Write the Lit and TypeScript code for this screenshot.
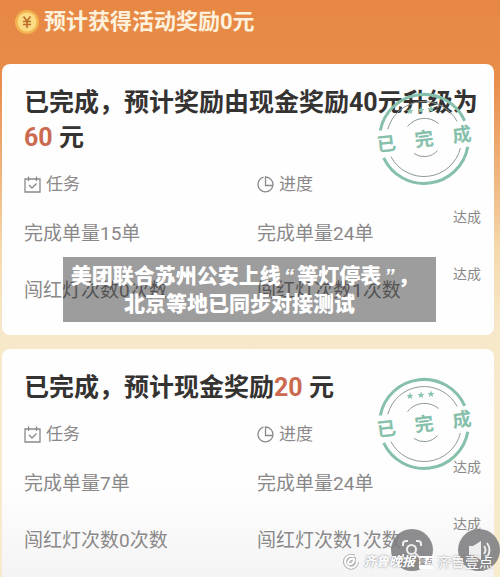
import { LitElement, html, css, svg } from "lit";
import { customElement, property } from "lit/decorators.js";

type Row = { task: string; progress: string };

const STAR = "M0,-3.4 L1,-1.1 L3.4,-0.9 L1.6,0.7 L2.1,3.1 L0,1.8 L-2.1,3.1 L-1.6,0.7 L-3.4,-0.9 L-1,-1.1 Z";

@customElement("done-stamp")
class DoneStamp extends LitElement {
  static styles = css`
    :host { display: block; width: 112px; height: 96px; }
    svg { display: block; width: 100%; height: 100%; }
    .ring { fill: none; stroke: #86c0ab; stroke-width: 3; }
    .line { fill: none; stroke: #8e9a96; stroke-width: 1; }
    .star { fill: #8cc4af; }
    .word { fill: #86c0ab; font: 700 19px "Noto Sans CJK SC", sans-serif; text-anchor: middle; }
  `;
  render() {
    return html`<svg viewBox="-56 -48 112 96" role="img" aria-label="已完成">
      <path class="ring" d="M-43.7,-8.5 A44.5,44.5 0 0 1 40.7,-18.1 M43.8,7.7 A44.5,44.5 0 0 1 -40.3,18.8" />
      <path class="line" d="M-36.2,-9.7 A37.5,37.5 0 0 1 33.1,-17.6 M36.4,9.1 A37.5,37.5 0 0 1 -33.1,17.6" />
      <path class="line" d="M-16.5,-12.5 A21.7,21.7 0 0 1 14.5,-15.5 M13.5,11.5 A17.7,17.7 0 0 1 -10,14.5" />
      ${[[-14, -28], [-3, -29], [7, -30]].map(
        ([x, y]) => svg`<path class="star" d=${STAR} transform="translate(${x} ${y})" />`
      )}
      <g transform="rotate(-7)">
        <text class="word" x="-38" y="7">已</text>
        <text class="word" x="0" y="7">完</text>
        <text class="word" x="38" y="7">成</text>
      </g>
    </svg>`;
  }
}

@customElement("reward-card")
class RewardCard extends LitElement {
  @property({ attribute: false }) rows: Row[] = [];

  static styles = css`
    :host {
      display: block;
      position: relative;
      background: #fefefe;
      border-radius: 8px;
      padding: 21px 13px 16px 22px;
    }
    :host([last]) {
      border-radius: 8px 8px 0 0;
      padding-bottom: 8px;
      background: linear-gradient(#fefefe 60%, #f4f4f5);
    }
    h2 { margin: 0 0 17px; font-size: 25px; line-height: 35px; font-weight: 700; color: #353332; }
    done-stamp { position: absolute; top: 27px; right: 14px; }
    table { width: 100%; table-layout: fixed; border-collapse: collapse; }
    th, td { padding: 0; text-align: left; font-weight: 400; color: #8a8888; }
    th { height: 24px; padding-bottom: 9px; font-size: 17px; line-height: 24px; }
    .task { width: 51%; }
    .state { width: 28px; }
    .label { display: flex; align-items: center; gap: 5px; }
    .label svg { width: 17px; height: 17px; fill: none; stroke: #8a8888; stroke-width: 1.3; }
    td { height: 57px; font-size: 19px; line-height: 24px; white-space: nowrap; }
    td.reached { vertical-align: top; font-size: 14px; }
  `;
  render() {
    return html`
      <h2><slot></slot></h2>
      <table>
        <thead>
          <tr>
            <th class="task">
              <span class="label">
                <svg viewBox="0 0 17 17"><path d="M1,3 H16 V16 H1 Z M4.5,0.5 V5 M12.5,0.5 V5 M5,9 L8,12 L12.5,7.5" /></svg>
                任务
              </span>
            </th>
            <th>
              <span class="label">
                <svg viewBox="0 0 17 17"><path d="M6.5,1.2 A7.5,7.5 0 1 0 15.9,9.5 H8.5 V1 A7.5,7.5 0 0 1 15.9,9.5" /></svg>
                进度
              </span>
            </th>
            <th class="state"></th>
          </tr>
        </thead>
        <tbody>
          ${this.rows.map(
            (r) => html`<tr><td>${r.task}</td><td>${r.progress}</td><td class="reached">达成</td></tr>`
          )}
        </tbody>
      </table>
      <done-stamp></done-stamp>
    `;
  }
}

@customElement("app-root")
class AppRoot extends LitElement {
  static styles = css`
    :host {
      display: block;
      position: relative;
      min-height: 100vh;
      box-sizing: border-box;
      overflow: hidden;
      font-family: Roboto, "Noto Sans CJK SC", sans-serif;
      background: linear-gradient(#e78744, #e98d4a 80px, #efb27a 170px, #f5d9ac 250px, #f7e8ca 330px, #f7ebcb);
    }
    header {
      display: flex;
      align-items: center;
      gap: 5px;
      height: 44px;
      padding-left: 15px;
      margin-bottom: 20px;
    }
    h1 { margin: 0; font-size: 22px; line-height: 30px; font-weight: 700; color: #fdf1dc; }
    .coin { width: 24px; height: 24px; }
    .cards { display: flex; flex-direction: column; gap: 14px; padding: 0 6px 0 2px; }
    .amount { color: #cb6a50; }
    .caption {
      position: absolute;
      top: 257px;
      left: 63px;
      right: 64px;
      margin: 0;
      padding: 4px 20px 7px 0;
      background: rgba(0, 0, 0, 0.38);
      color: #fff;
      font: 900 21px/26px "Noto Sans CJK SC", sans-serif;
      text-align: center;
      white-space: nowrap;
    }
    .quote { font-family: "Liberation Sans", sans-serif; font-style: italic; padding: 0 3px; }
    .half { font-feature-settings: "halt"; }
    .tools { position: absolute; right: 0; bottom: 6px; display: flex; gap: 25px; }
    button {
      width: 42px;
      height: 42px;
      padding: 0;
      border: 0;
      border-radius: 50%;
      background: rgba(125, 125, 128, 0.88);
    }
    button svg { display: block; width: 42px; height: 42px; fill: none; stroke: #eee; stroke-width: 2; }
    .solid { fill: #eee; stroke: none; }
    .mark {
      position: absolute;
      right: 7px;
      bottom: 5px;
      display: flex;
      align-items: center;
      gap: 4px;
      color: #fff;
      font-size: 14px;
      line-height: 20px;
      text-shadow: 0 0 2px #777;
      pointer-events: none;
    }
    .mark svg { flex: none; width: 16px; height: 16px; fill: none; }
    .halo { stroke: #b4b4b4; stroke-width: 4; }
    .swirl { stroke: #fff; stroke-width: 2; }
    .script { font-style: italic; font-weight: 700; font-size: 13px; }
    .tag { background: #fff; color: #777; font-size: 7px; line-height: 13px; text-shadow: none; border-radius: 1px; }
  `;

  private first: Row[] = [
    { task: "完成单量15单", progress: "完成单量24单" },
    { task: "闯红灯次数0次数", progress: "闯红灯次数1次数" },
  ];
  private second: Row[] = [
    { task: "完成单量7单", progress: "完成单量24单" },
    { task: "闯红灯次数0次数", progress: "闯红灯次数1次数" },
  ];

  render() {
    return html`
      <header>
        <svg class="coin" viewBox="0 0 24 24">
          <circle cx="12" cy="12" r="12" fill="#f3b350" />
          <circle cx="12" cy="12" r="9.5" fill="#fbdc85" />
          <path d="M8.5,6.5 L12,11 L15.5,6.5 M12,11 V18 M8,11.5 H16 M8,14.5 H16" fill="none" stroke="#bb6a28" stroke-width="1.6" />
        </svg>
        <h1>预计获得活动奖励0元</h1>
      </header>
      <div class="cards">
        <reward-card .rows=${this.first}>已完成，预计奖励由现金奖励40元升级为<span class="amount">60</span> 元</reward-card>
        <reward-card last .rows=${this.second}>已完成，预计现金奖励<span class="amount">20</span> 元</reward-card>
      </div>
      <p class="caption">美团联合苏州公安上线<span class="quote">“</span>等灯停表<span class="quote">”</span><span class="half">，</span><br />北京等地已同步对接测试</p>
      <div class="tools">
        <button aria-label="识图">
          <svg viewBox="0 0 42 42">
            <path d="M12,17 V15 Q12,12 15,12 H17 M25,12 H27 Q30,12 30,15 V17 M12,25 V27 Q12,30 15,30 H17" />
            <circle cx="20.5" cy="20.5" r="4.5" />
            <path d="M24,24 L29,29" />
          </svg>
        </button>
        <button aria-label="朗读">
          <svg viewBox="0 0 42 42">
            <path class="solid" d="M11,17 H15 L23,12 V31 L15,26 H11 Z" />
            <path d="M26,17 Q29,21 26,25 M29,14 Q34,21 29,28" />
          </svg>
        </button>
      </div>
      <div class="mark">
        <svg viewBox="0 0 16 16">
          <path class="halo" d="M11,2.5 A6,6 0 1 0 14,8 M5,10 Q5,4 11,5 Q11,11 5,10" />
          <path class="swirl" d="M11,2.5 A6,6 0 1 0 14,8 M5,10 Q5,4 11,5 Q11,11 5,10" />
        </svg>
        <span class="script">齐鲁晚报</span>
        <span class="tag">壹点</span>
        <span>齐鲁壹点</span>
      </div>
    `;
  }
}
